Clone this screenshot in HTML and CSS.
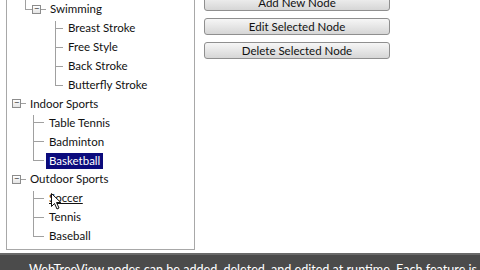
FILE: index.html
```html
<!DOCTYPE html>
<html lang="en">
<head>
    <meta charset="UTF-8">
    <title>WebTreeView Demo</title>
    <link rel="stylesheet" href="styles.css">
</head>
<body>
    <div class="main">
        <div class="tree">
            <div class="node">
                <span class="pad" style="width:18px"></span>
                <span class="elbow last short"></span>
                <span class="toggle">&minus;</span>
                <span class="dash"></span>
                <span class="label">Swimming</span>
            </div>
            <div class="node">
                <span class="pad" style="width:48px"></span>
                <span class="elbow mid"></span>
                <span class="label">Breast Stroke</span>
            </div>
            <div class="node">
                <span class="pad" style="width:48px"></span>
                <span class="elbow"></span>
                <span class="label">Free Style</span>
            </div>
            <div class="node">
                <span class="pad" style="width:48px"></span>
                <span class="elbow"></span>
                <span class="label">Back Stroke</span>
            </div>
            <div class="node">
                <span class="pad" style="width:48px"></span>
                <span class="elbow last"></span>
                <span class="label">Butterfly Stroke</span>
            </div>

            <div class="node root">
                <span class="pad" style="width:5px"></span>
                <span class="toggle">&minus;</span>
                <span class="dash"></span>
                <span class="label">Indoor Sports</span>
            </div>
            <div class="node">
                <span class="pad" style="width:26px"></span>
                <span class="elbow wide mid"></span>
                <span class="label">Table Tennis</span>
            </div>
            <div class="node">
                <span class="pad" style="width:26px"></span>
                <span class="elbow wide"></span>
                <span class="label">Badminton</span>
            </div>
            <div class="node">
                <span class="pad" style="width:26px"></span>
                <span class="elbow wide last"></span>
                <span class="label selected">Basketball</span>
            </div>

            <div class="node root">
                <span class="pad" style="width:5px"></span>
                <span class="toggle">&minus;</span>
                <span class="dash"></span>
                <span class="label">Outdoor Sports</span>
            </div>
            <div class="node">
                <span class="pad" style="width:26px"></span>
                <span class="elbow wide mid"></span>
                <span class="label hover">Soccer</span>
            </div>
            <div class="node">
                <span class="pad" style="width:26px"></span>
                <span class="elbow wide"></span>
                <span class="label">Tennis</span>
            </div>
            <div class="node">
                <span class="pad" style="width:26px"></span>
                <span class="elbow wide last"></span>
                <span class="label">Baseball</span>
            </div>

            <!-- mouse pointer over Soccer -->
            <svg class="cursor" width="11" height="17" viewBox="0 0 11 17">
                <path d="M0.5 0.5 L0.5 13.5 L3.5 10.5 L6 16 L8 15 L5.5 9.5 L9.8 9.5 Z" fill="#fff" stroke="#111" stroke-width="1"/>
            </svg>
        </div>

        <div class="actions">
            <button class="btn">Add New Node</button>
            <button class="btn">Edit Selected Node</button>
            <button class="btn">Delete Selected Node</button>
        </div>
    </div>

    <div class="caption">WebTreeView nodes can be added, deleted, and edited at runtime. Each feature is</div>
</body>
</html>
```

FILE: styles.css
```css
body {
    margin: 0;
    background-color: #fff;
    font-family: Lato, "Noto Sans", Arial, sans-serif;
    font-size: 11.5px;
    color: #111;
    overflow: hidden;
}
.main {
    display: flex;
    align-items: flex-start;
    height: 253px;
}
.tree {
    position: relative;
    width: 187px;
    height: 249px;
    margin-left: 6px;
    border: 1px solid #a8a8a8;
    border-top: none;
}
.node {
    display: flex;
    align-items: center;
    height: 18.9px;
    white-space: nowrap;
}
.pad {
    flex: none;
    align-self: stretch;
}
.elbow {
    flex: none;
    align-self: stretch;
    width: 8px;
    margin-right: 2px;
    background:
        linear-gradient(#a0a0a0, #a0a0a0) left top / 1px 100% no-repeat,
        linear-gradient(90deg, #a0a0a0, #a0a0a0) left center / 100% 1px no-repeat;
}
.elbow.wide {
    width: 11px;
}
.elbow.last {
    background-size: 1px 50%, 100% 1px;
}
.elbow.mid {
    background:
        linear-gradient(#a0a0a0, #a0a0a0) left 2px / 1px 100% no-repeat,
        linear-gradient(90deg, #a0a0a0, #a0a0a0) left center / 100% 1px no-repeat;
}
.elbow.short {
    width: 7px;
    margin-right: 0;
}
.toggle {
    flex: none;
    box-sizing: border-box;
    width: 9px;
    height: 9px;
    border: 1px solid #8c8c8c;
    background: linear-gradient(#fff, #e4e4e4);
    color: #333;
    font-family: "Noto Sans", sans-serif;
    font-size: 9px;
    line-height: 6px;
    text-align: center;
}
.dash {
    flex: none;
    width: 5px;
    height: 1px;
    margin-right: 1px;
    background-color: #a0a0a0;
}
.label {
    padding: 0 3px;
    line-height: 16px;
}
.label.selected {
    background-color: #0b0b7c;
    color: #fff;
}
.label.hover {
    text-decoration: underline;
}
.cursor {
    position: absolute;
    left: 44px;
    top: 193px;
}
.actions {
    display: flex;
    flex-direction: column;
    gap: 7px;
    margin-left: 9px;
    margin-top: -6px;
}
.btn {
    width: 186px;
    height: 17px;
    padding: 0;
    border: 1px solid #8f8f8f;
    border-radius: 3px;
    background: linear-gradient(#f6f6f6, #e6e6e6 50%, #d6d6d6);
    font-family: Lato, "Noto Sans", Arial, sans-serif;
    font-size: 11.5px;
    color: #111;
    line-height: 15px;
}
.caption {
    height: 15px;
    border-top: 2px solid #6a6a6a;
    background-color: #4b4b4b;
    color: #fff;
    font-size: 12.6px;
    padding: 7px 0 0 29px;
    white-space: nowrap;
    overflow: hidden;
}
```
